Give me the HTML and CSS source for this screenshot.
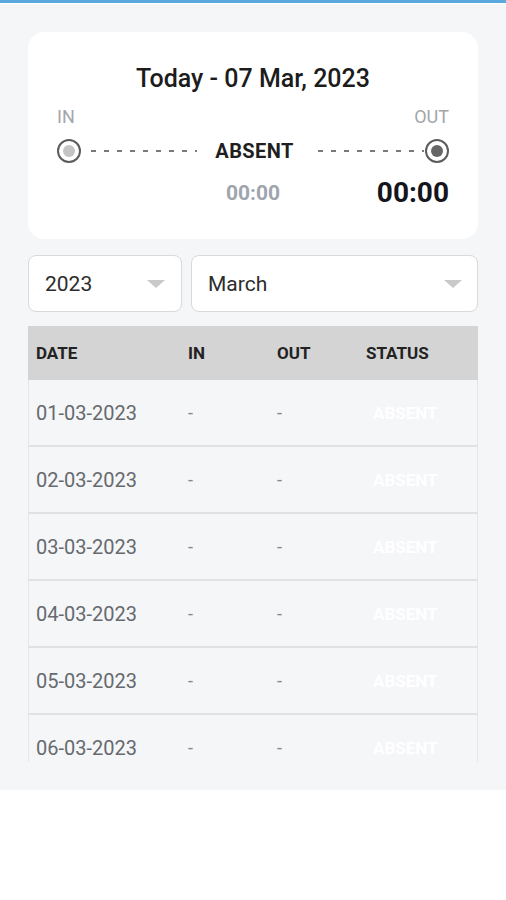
FILE: index.html
```html
<!DOCTYPE html>
<html>
<head>
<meta charset="utf-8">
<link rel="stylesheet" href="styles.css">
</head>
<body>
<div class="topbar"></div>
<main class="screen">
  <section class="card">
    <h1 class="title">Today - 07 Mar, 2023</h1>
    <div class="labels"><span>IN</span><span>OUT</span></div>
    <div class="track">
      <span class="dot dot-in"></span>
      <span class="dash dash-left"></span>
      <span class="status">ABSENT</span>
      <span class="dash dash-right"></span>
      <span class="dot dot-out"></span>
    </div>
    <div class="times">
      <span></span>
      <span class="time-in">00:00</span>
      <span class="time-out">00:00</span>
    </div>
  </section>

  <div class="filters">
    <div class="select year"><span>2023</span><i class="caret"></i></div>
    <div class="select month"><span>March</span><i class="caret"></i></div>
  </div>

  <div class="table">
    <div class="row head">
      <span>DATE</span><span>IN</span><span>OUT</span><span>STATUS</span>
    </div>
    <div class="body">
      <div class="row"><span>01-03-2023</span><span>-</span><span>-</span><span class="st">ABSENT</span></div>
      <div class="row"><span>02-03-2023</span><span>-</span><span>-</span><span class="st">ABSENT</span></div>
      <div class="row"><span>03-03-2023</span><span>-</span><span>-</span><span class="st">ABSENT</span></div>
      <div class="row"><span>04-03-2023</span><span>-</span><span>-</span><span class="st">ABSENT</span></div>
      <div class="row"><span>05-03-2023</span><span>-</span><span>-</span><span class="st">ABSENT</span></div>
      <div class="row"><span>06-03-2023</span><span>-</span><span>-</span><span class="st">ABSENT</span></div>
    </div>
  </div>
</main>
</body>
</html>
```
FILE: styles.css
```css
* { box-sizing: border-box; }
html, body { margin: 0; padding: 0; background: #ffffff; }
body { font-family: Roboto, "Liberation Sans", sans-serif; color: #222; }

.topbar {
  height: 4px;
  background: #5aa8dd;
  border-bottom: 1px solid #ffffff;
}

.screen {
  background: #f4f6f8;
  height: 786px;
  padding: 28px 28px 0;
  display: flex;
  flex-direction: column;
}

.card {
  background: #ffffff;
  border-radius: 16px;
  height: 207px;
  padding: 32px 29px 0;
  flex: none;
}

.title {
  margin: 0;
  text-align: center;
  font-size: 25px;
  font-weight: 500;
  line-height: 30px;
  color: #1c1c1c;
}

.labels {
  display: flex;
  justify-content: space-between;
  font-size: 18px;
  line-height: 20px;
  color: #a2a6ab;
  margin-top: 13px;
}

.track {
  display: flex;
  align-items: center;
  height: 24px;
  margin-top: 12px;
}

.dot {
  width: 24px;
  height: 24px;
  border-radius: 50%;
  border: 2px solid #5c5c5c;
  display: flex;
  align-items: center;
  justify-content: center;
  flex: none;
}
.dot::after {
  content: "";
  width: 12px;
  height: 12px;
  border-radius: 50%;
  background: #c4c4c4;
}
.dot-out::after { background: #666666; }

.dash {
  flex: 1;
  height: 2px;
  background: repeating-linear-gradient(90deg, #7a7a7a 0 5px, transparent 5px 13px);
}
.dash-left { margin: 0 18px 0 10px; }
.dash-right { margin: 0 1px 0 24px; }

.status {
  font-size: 20px;
  font-weight: 700;
  letter-spacing: 0.4px;
  color: #1f1f1f;
}

.times {
  display: grid;
  grid-template-columns: 1fr auto 1fr;
  align-items: center;
  margin-top: 13px;
}
.time-in {
  font-size: 21px;
  font-weight: 700;
  color: #9ea5ae;
}
.time-out {
  text-align: right;
  font-size: 28px;
  font-weight: 700;
  color: #15151c;
}

.filters {
  display: flex;
  gap: 9px;
  margin-top: 16px;
  flex: none;
}
.select {
  height: 57px;
  background: #ffffff;
  border: 1px solid #d9d9d9;
  border-radius: 8px;
  display: flex;
  align-items: center;
  justify-content: space-between;
  padding: 0 16px 0 16px;
  font-size: 21px;
  color: #2c2c2c;
}
.year { width: 154px; }
.month { flex: 1; padding-right: 15px; }
.caret {
  width: 0;
  height: 0;
  border-left: 9px solid transparent;
  border-right: 9px solid transparent;
  border-top: 8px solid #c9c9c9;
}

.table {
  margin-top: 14px;
  height: 436px;
  overflow: hidden;
  flex: none;
}
.row {
  display: grid;
  grid-template-columns: 152px 89px 89px 1fr;
  align-items: center;
  padding-left: 8px;
}
.row.head {
  background: #d4d4d4;
  height: 54px;
  font-size: 17px;
  font-weight: 700;
  color: #222;
}
.body .row {
  height: 67px;
  border: 1px solid #e4e6e8;
  border-bottom: 2px solid #dfe1e3;
  border-top: none;
  background: #f5f6f8;
  font-size: 20px;
  color: #666a6e;
  padding-left: 7px;
}
.body .row span:nth-child(2),
.body .row span:nth-child(3) { font-size: 18px; color: #888; }
.st {
  color: #ffffff;
  font-size: 17px;
  font-weight: 700;
  padding-left: 7px;
}
```
